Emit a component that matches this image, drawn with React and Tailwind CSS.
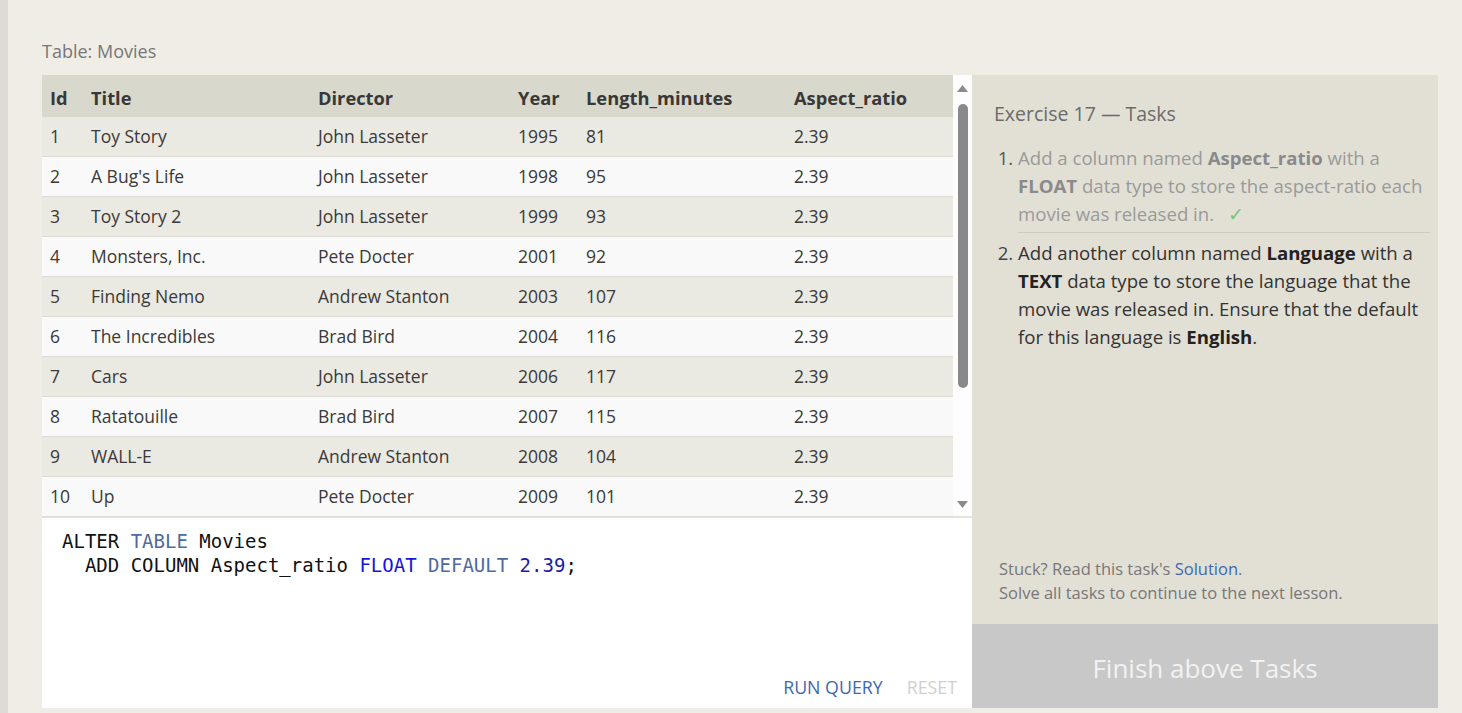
import React from "react";

const rows = [
  [1, "Toy Story", "John Lasseter", 1995, 81, "2.39"],
  [2, "A Bug's Life", "John Lasseter", 1998, 95, "2.39"],
  [3, "Toy Story 2", "John Lasseter", 1999, 93, "2.39"],
  [4, "Monsters, Inc.", "Pete Docter", 2001, 92, "2.39"],
  [5, "Finding Nemo", "Andrew Stanton", 2003, 107, "2.39"],
  [6, "The Incredibles", "Brad Bird", 2004, 116, "2.39"],
  [7, "Cars", "John Lasseter", 2006, 117, "2.39"],
  [8, "Ratatouille", "Brad Bird", 2007, 115, "2.39"],
  [9, "WALL-E", "Andrew Stanton", 2008, 104, "2.39"],
  [10, "Up", "Pete Docter", 2009, 101, "2.39"],
];

const cols = ["Id", "Title", "Director", "Year", "Length_minutes", "Aspect_ratio"];
const widths = ["w-[41px]", "w-[227px]", "w-[200px]", "w-[68px]", "w-[208px]", "w-[167px]"];

export default function App() {
  return (
    <div
      className="flex h-[713px] w-full overflow-hidden bg-[#f0ede6]"
      style={{ fontFamily: '"Open Sans", "Noto Sans", sans-serif' }}
    >
      <div className="w-[8px] shrink-0 bg-[#dedad6]" />
      <div className="flex flex-col pl-[34px] pt-[38px]">
        <div className="mb-[11px] h-[26px] text-[18px] leading-[26px] text-[#777]">Table: Movies</div>
        <div className="flex h-[633px]">
          {/* left column */}
          <div className="flex w-[930px] flex-col">
            <div className="flex h-[443px] border-b-[2px] border-[#e4e3dc]">
              <div className="w-[911px]">
                <div className="flex h-[42px] items-center bg-[#d9d8cd] pt-[3px] text-[18.3px] font-bold text-[#383838]">
                  {cols.map((c, i) => (
                    <div key={c} className={`${widths[i]} pl-[8px]`}>{c}</div>
                  ))}
                </div>
                {rows.map((r, ri) => (
                  <div
                    key={ri}
                    className={`flex h-[40px] items-center border-b border-[#dcdbd4] text-[17.5px] text-[#3a3a3a] ${
                      ri % 2 === 0 ? "bg-[#eae9e2]" : "bg-[#f9f9f9]"
                    }`}
                  >
                    {r.map((v, i) => (
                      <div key={i} className={`${widths[i]} pl-[8px]`}>{v}</div>
                    ))}
                  </div>
                ))}
              </div>
              <div className="flex w-[19px] flex-col items-center bg-[#fdfdfd] pt-[10px]">
                <svg width="11" height="7" viewBox="0 0 11 7">
                  <polygon points="5.5,0 11,7 0,7" fill="#8a8a8a" />
                </svg>
                <div className="mt-[12px] h-[284px] w-[10px] rounded-full bg-[#898989]" />
                <div className="flex-1" />
                <svg width="11" height="7" viewBox="0 0 11 7" className="mb-[8px]">
                  <polygon points="0,0 11,0 5.5,7" fill="#8a8a8a" />
                </svg>
              </div>
            </div>
            <div className="flex flex-1 flex-col bg-white">
              <div
                className="pl-[20px] pt-[11px] text-[19px] leading-[24px] text-[#111]"
                style={{ fontFamily: '"DejaVu Sans Mono", "Liberation Mono", monospace' }}
              >
                <div className="whitespace-pre">
                  ALTER <span className="text-[#4f6a9e]">TABLE</span> Movies
                </div>
                <div className="whitespace-pre">
                  {"  ADD COLUMN Aspect_ratio "}
                  <span className="text-[#1515d6]">FLOAT</span>{" "}
                  <span className="text-[#4f6a9e]">DEFAULT</span>{" "}
                  <span className="text-[#1c1ca8]">2.39</span>;
                </div>
              </div>
              <div className="mt-auto flex justify-end gap-[24px] pb-[8px] pr-[15px] text-[17.8px] leading-[26px]">
                <span className="text-[#3d68b5]">RUN QUERY</span>
                <span className="text-[#cfcfcf]">RESET</span>
              </div>
            </div>
          </div>
          {/* right panel */}
          <div className="flex w-[466px] flex-col bg-[#e2e0d5]">
            <div className="pl-[22px] pr-[8px] pt-[25px]">
              <div className="mb-[16px] text-[19.5px] leading-[28px] text-[#6b6b6b]">Exercise 17 — Tasks</div>
              <ol className="list-decimal pl-[24px] text-[18.6px] leading-[28px]">
                <li className="border-b border-[#cdcac0] pb-[4px] text-[#9a9a9a] marker:text-[#555]">
                  Add a column named <b className="text-[#8a8a8a]">Aspect_ratio</b> with a{" "}
                  <b className="text-[#8a8a8a]">FLOAT</b> data type to store the aspect-ratio each movie was released in.
                  <span className="ml-[14px] text-[#7cc27c]">✓</span>
                </li>
                <li className="pt-[6px] text-[#333] marker:text-[#444]">
                  Add another column named <b className="text-[#222]">Language</b> with a{" "}
                  <b className="text-[#222]">TEXT</b> data type to store the language that the movie was released in.
                  Ensure that the default for this language is <b className="text-[#222]">English</b>.
                </li>
              </ol>
            </div>
            <div className="mt-auto mb-[19px] pl-[27px] text-[16.5px] leading-[24px] text-[#777]">
              <div>
                Stuck? Read this task's <span className="text-[#3d68b5]">Solution</span>.
              </div>
              <div>Solve all tasks to continue to the next lesson.</div>
            </div>
            <div className="flex h-[84px] items-center justify-center bg-[#c8c8c8] pt-[4px] text-[26px] text-[#f2f2f2]">
              Finish above Tasks
            </div>
          </div>
        </div>
      </div>
    </div>
  );
}
